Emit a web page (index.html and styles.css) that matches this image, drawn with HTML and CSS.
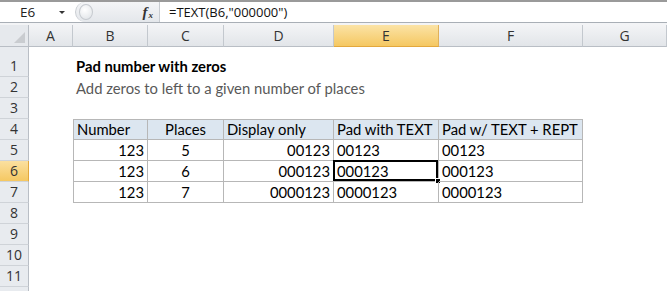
FILE: index.html
```html
<!DOCTYPE html>
<html>
<head>
<meta charset="utf-8">
<link rel="stylesheet" href="styles.css">
</head>
<body>
<div class="app">
  <div class="fbar">
    <div class="namebox"><span class="nb-text">E6</span><span class="nb-arrow"></span></div>
    <div class="grip">
      <span class="grip-knob"></span>
      <span class="fx">f<sub>x</sub></span>
    </div>
    <div class="formula">=TEXT(B6,"000000")</div>
  </div>
  <div class="gap"></div>
  <div class="sheet">
    <div class="row hdr">
      <div class="corner"><span class="tri"></span></div>
      <div class="ch">A</div><div class="ch">B</div><div class="ch">C</div><div class="ch">D</div><div class="ch sel">E</div><div class="ch">F</div><div class="ch">G</div>
    </div>
    <div class="row r1">
      <div class="rh">1</div><div class="c"></div><div class="c title">Pad number with zeros</div><div class="c"></div><div class="c"></div><div class="c"></div><div class="c"></div><div class="c"></div>
    </div>
    <div class="row">
      <div class="rh">2</div><div class="c"></div><div class="c sub">Add zeros to left to a given number of places</div><div class="c"></div><div class="c"></div><div class="c"></div><div class="c"></div><div class="c"></div>
    </div>
    <div class="row">
      <div class="rh">3</div><div class="c"></div><div class="c"></div><div class="c"></div><div class="c"></div><div class="c"></div><div class="c"></div><div class="c"></div>
    </div>
    <div class="row">
      <div class="rh">4</div><div class="c"></div>
      <div class="c t th first top">Number</div><div class="c t th top ctr">Places</div><div class="c t th top">Display only</div><div class="c t th top">Pad with TEXT</div><div class="c t th top">Pad w/ TEXT + REPT</div>
      <div class="c"></div>
    </div>
    <div class="row">
      <div class="rh">5</div><div class="c"></div>
      <div class="c t first rt">123</div><div class="c t ctr">5</div><div class="c t rt">00123</div><div class="c t">00123</div><div class="c t">00123</div>
      <div class="c"></div>
    </div>
    <div class="row">
      <div class="rh sel">6</div><div class="c"></div>
      <div class="c t first rt">123</div><div class="c t ctr">6</div><div class="c t rt">000123</div><div class="c t active">000123<span class="handle"></span></div><div class="c t">000123</div>
      <div class="c"></div>
    </div>
    <div class="row">
      <div class="rh">7</div><div class="c"></div>
      <div class="c t first rt">123</div><div class="c t ctr">7</div><div class="c t rt">0000123</div><div class="c t">0000123</div><div class="c t">0000123</div>
      <div class="c"></div>
    </div>
    <div class="row"><div class="rh">8</div></div>
    <div class="row"><div class="rh">9</div></div>
    <div class="row"><div class="rh">10</div></div>
    <div class="row"><div class="rh">11</div></div>
    <div class="row"><div class="rh"></div></div>
  </div>
</div>
</body>
</html>
```
FILE: styles.css
```css
* { box-sizing: border-box; }
html, body { margin: 0; padding: 0; background: #fff; overflow: hidden; }
.app {
  width: 667px; height: 291px; overflow: hidden;
  font-family: Lato, "Liberation Sans", sans-serif;
  font-size: 14.8px; color: #000;
}
.fbar {
  display: flex; height: 23px;
  border-top: 2px solid #9a9a9a;
  border-bottom: 1px solid #a9afb6;
  background: #fff;
}
.namebox {
  width: 73px; display: flex; align-items: center;
  padding-left: 20px; position: relative;
  font-family: "Open Sans", "Liberation Sans", sans-serif; font-size: 13.5px; color: #222;
}
.nb-arrow {
  position: absolute; left: 59px; top: 9px;
  border-left: 3px solid transparent; border-right: 3px solid transparent;
  border-top: 3px solid #333;
}
.grip {
  width: 85px; position: relative;
  background: linear-gradient(#f4f5f7, #e4e7eb);
  border-left: 1px solid #c8ccd1;
  border-right: 1px solid #c8ccd1;
  border-radius: 10px 0 0 10px;
  margin: 0 0 0 2px;
}
.grip-knob {
  position: absolute; left: 3px; top: 2px; width: 14px; height: 16px;
  border-radius: 50%; border: 1px solid #c6cacf;
  background: radial-gradient(circle at 40% 35%, #ffffff, #dde1e5);
}
.fx {
  position: absolute; right: 6px; top: 0px;
  font-family: "Liberation Serif", serif; font-style: italic; font-weight: bold;
  font-size: 15px; color: #333; line-height: 20px;
}
.fx sub { font-size: 9px; vertical-align: -1px; margin-left: 1px; }
.formula {
  flex: 1; padding-left: 9px; display: flex; align-items: center;
  font-family: "Open Sans", "Liberation Sans", sans-serif; font-size: 13px; color: #111;
}
.gap { height: 2px; background: #f3f4f6; }
.sheet { display: flex; flex-direction: column; }
.row {
  display: grid;
  grid-template-columns: 29px 44px 75px 76px 110px 105px 144px 84px;
  height: 21px;
}
.row.hdr { height: 22px; }
.row.r1 { height: 30px; }
.corner {
  background: #e6e9ed; border-right: 1px solid #b9bec5; border-bottom: 1px solid #b9bec5;
  position: relative;
}
.tri {
  position: absolute; right: 3px; bottom: 3px;
  border-left: 11px solid transparent; border-bottom: 11px solid #c9ccd0;
}
.ch {
  background: linear-gradient(#f3f4f6, #e2e5e9);
  border-right: 1px solid #c3c8ce; border-bottom: 1px solid #b9bec5;
  text-align: center; line-height: 21px; color: #333;
  font-family: "Open Sans", "Liberation Sans", sans-serif; font-size: 14px;
}
.ch.sel { background: linear-gradient(#fbe3a6, #f5c862); border-bottom: 1px solid #e3a83d; border-right-color: #e0b15a; }
.rh {
  background: #e8ebef; border-right: 1px solid #b9bec5; border-bottom: 1px solid #cfd3d8;
  text-align: center; color: #333; display: flex; align-items: flex-end; justify-content: center;
  padding-bottom: 1px; font-family: "Open Sans", "Liberation Sans", sans-serif; font-size: 14px;
}
.rh.sel { background: linear-gradient(#fbe0a0, #f5c862); border-right-color: #e3a83d; }
.c {
  white-space: nowrap; overflow: visible; padding: 0 3px 1px;
  display: flex; align-items: flex-end; line-height: 18px;
  position: relative;
}
.title { font-weight: bold; padding-bottom: 2px; }
.sub { color: #595959; }
.t { border-right: 1px solid #b7b7b7; border-bottom: 1px solid #b7b7b7; }
.t.first { border-left: 1px solid #b7b7b7; }
.t.top { border-top: 1px solid #b7b7b7; }
.th { background: #dce6f0; }
.rt { justify-content: flex-end; }
.ctr { justify-content: center; }
.active { box-shadow: inset 0 0 0 2px #000; margin: -1px 0 0 -1px; padding-left: 4px; }
.handle {
  position: absolute; right: -3px; bottom: -3px; width: 6px; height: 6px;
  background: #000; border: 1px solid #fff;
}
```
